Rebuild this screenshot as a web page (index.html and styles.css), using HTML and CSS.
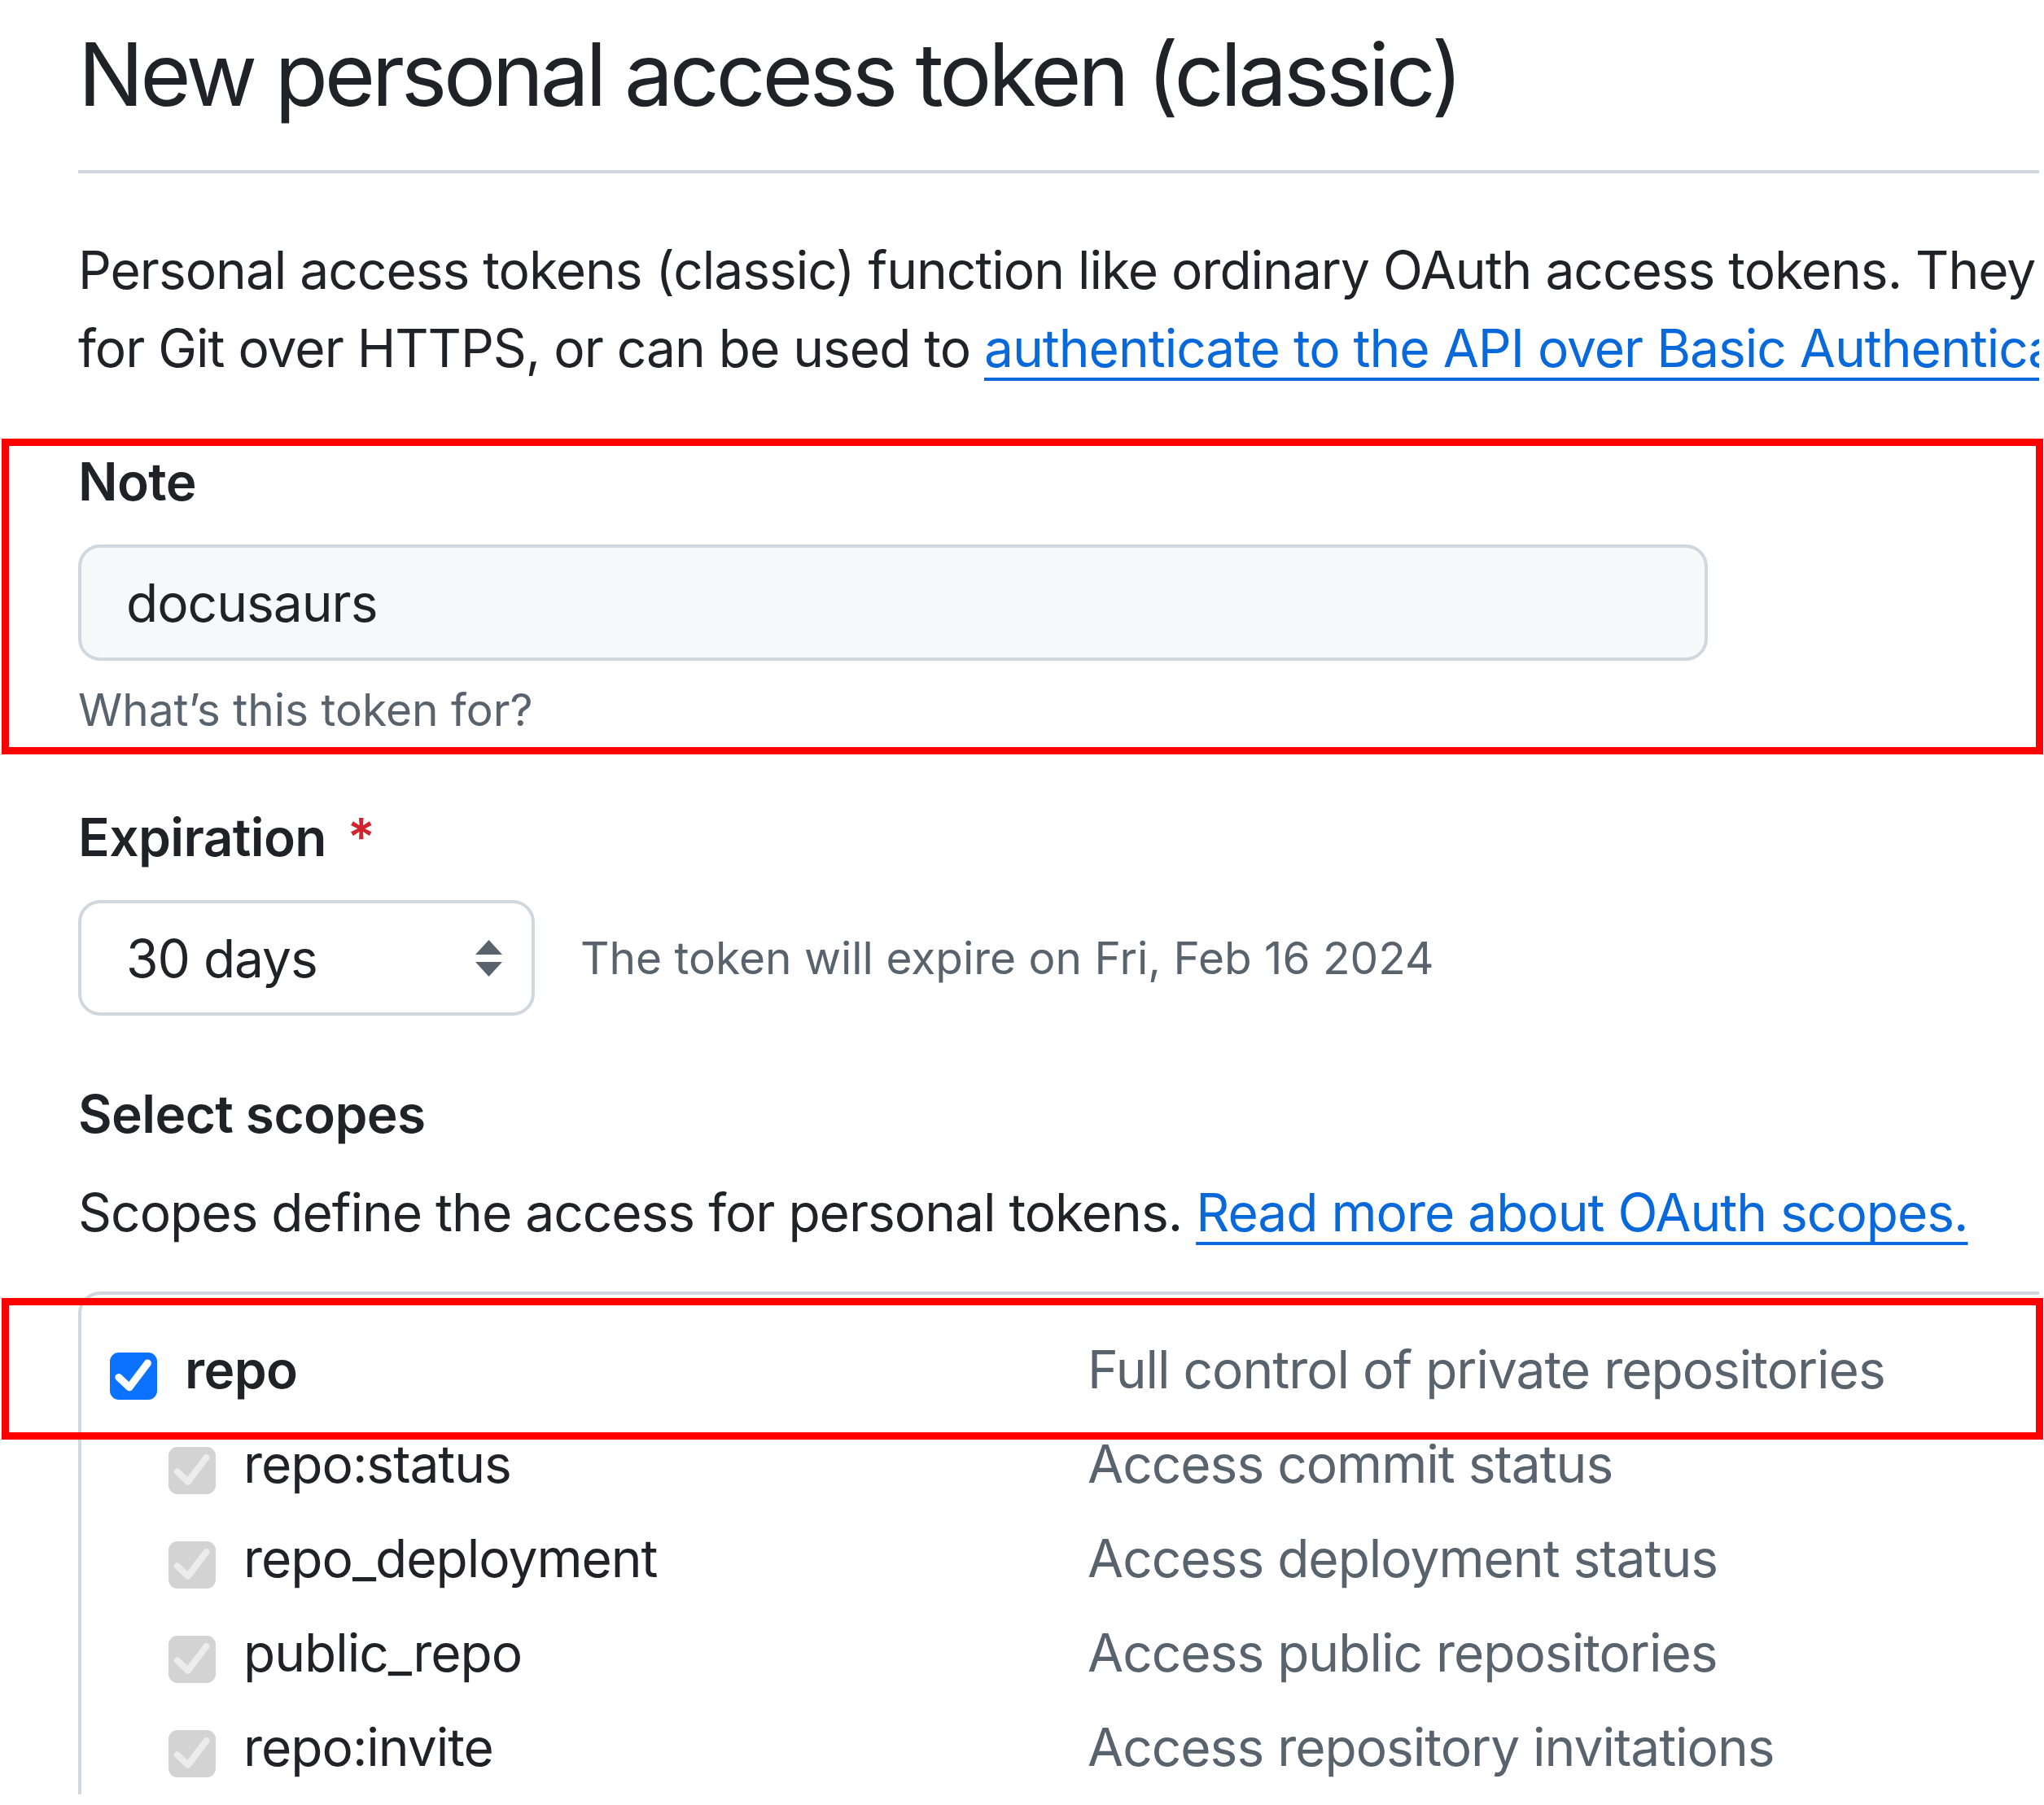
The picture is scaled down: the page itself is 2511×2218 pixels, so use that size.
FILE: index.html
```html
<!DOCTYPE html>
<html lang="en">
<head>
<meta charset="utf-8">
<title>New personal access token (classic)</title>
<link rel="stylesheet" href="styles.css">
</head>
<body>
<div class="shot">
  <main class="page">
    <div class="subhead">
      <h1 class="subhead-heading">New personal access token (classic)</h1>
    </div>

    <p class="intro">
      <span class="line">Personal access tokens (classic) function like ordinary OAuth access tokens. They can be used instead of a password</span>
      <span class="line">for Git over HTTPS, or can be used to <a href="#" class="link">authenticate to the API over Basic Authentication</a>.</span>
    </p>

    <section class="form-group">
      <label class="form-label" for="note">Note</label>
      <input class="text-input" id="note" type="text" value="docusaurs">
      <p class="note">What’s this token for?</p>
    </section>

    <section class="form-group">
      <div class="form-label">Expiration <span class="required">*</span></div>
      <div class="select-row">
        <div class="select">
          <span>30 days</span>
          <svg class="select-arrows" width="33" height="45" viewBox="0 0 33 45" aria-hidden="true">
            <polygon points="0,18 16.5,0 33,18" fill="#59636e"/>
            <polygon points="0,27 33,27 16.5,45" fill="#59636e"/>
          </svg>
        </div>
        <span class="expire-text">The token will expire on Fri, Feb 16 2024</span>
      </div>
    </section>

    <section class="form-group scopes-group">
      <div class="form-label">Select scopes</div>
      <p class="scopes-intro">Scopes define the access for personal tokens. <a href="#" class="link">Read more about OAuth scopes.</a></p>

      <div class="scope-box">
        <div class="scope-row">
          <div class="scope-name">
            <span class="checkbox checked">
              <svg viewBox="0 0 16 16" aria-hidden="true"><polyline points="3,8.4 6.6,11.8 12.8,3.6" fill="none" stroke="#fff" stroke-width="2.5" stroke-linecap="round" stroke-linejoin="round"/></svg>
            </span>
            <strong>repo</strong>
          </div>
          <div class="scope-desc">Full control of private repositories</div>
        </div>
        <div class="scope-row sub">
          <div class="scope-name">
            <span class="checkbox disabled">
              <svg viewBox="0 0 16 16" aria-hidden="true"><polyline points="3,8.4 6.6,11.8 12.8,3.6" fill="none" stroke="#ececec" stroke-width="2.2" stroke-linecap="round" stroke-linejoin="round"/></svg>
            </span>
            <span>repo:status</span>
          </div>
          <div class="scope-desc">Access commit status</div>
        </div>
        <div class="scope-row sub">
          <div class="scope-name">
            <span class="checkbox disabled">
              <svg viewBox="0 0 16 16" aria-hidden="true"><polyline points="3,8.4 6.6,11.8 12.8,3.6" fill="none" stroke="#ececec" stroke-width="2.2" stroke-linecap="round" stroke-linejoin="round"/></svg>
            </span>
            <span>repo_deployment</span>
          </div>
          <div class="scope-desc">Access deployment status</div>
        </div>
        <div class="scope-row sub">
          <div class="scope-name">
            <span class="checkbox disabled">
              <svg viewBox="0 0 16 16" aria-hidden="true"><polyline points="3,8.4 6.6,11.8 12.8,3.6" fill="none" stroke="#ececec" stroke-width="2.2" stroke-linecap="round" stroke-linejoin="round"/></svg>
            </span>
            <span>public_repo</span>
          </div>
          <div class="scope-desc">Access public repositories</div>
        </div>
        <div class="scope-row sub">
          <div class="scope-name">
            <span class="checkbox disabled">
              <svg viewBox="0 0 16 16" aria-hidden="true"><polyline points="3,8.4 6.6,11.8 12.8,3.6" fill="none" stroke="#ececec" stroke-width="2.2" stroke-linecap="round" stroke-linejoin="round"/></svg>
            </span>
            <span>repo:invite</span>
          </div>
          <div class="scope-desc">Access repository invitations</div>
        </div>
      </div>
    </section>
  </main>

  <div class="mark mark-note"></div>
  <div class="mark mark-repo"></div>
</div>
</body>
</html>
```

FILE: styles.css
```css
html, body {
  margin: 0;
  padding: 0;
  background: #ffffff;
}

body {
  font-family: Inter, "Liberation Sans", "DejaVu Sans", sans-serif;
  color: #1f2328;
  overflow: hidden;
}

.shot {
  position: relative;
  width: 2511px;
  height: 2218px;
  overflow: hidden;
}

.page {
  width: 2409px;
  padding-left: 96px;
  overflow: hidden;
}

/* Heading */
.subhead {
  margin-top: 23px;
  padding-bottom: 49px;
  border-bottom: 4px solid #d0d7de;
}

.subhead-heading {
  margin: 0;
  font-size: 107px;
  font-weight: 400;
  line-height: 137px;
  letter-spacing: -4.3px;
}

/* Intro paragraph */
.intro {
  margin: 71px 0 0;
  font-size: 64px;
  line-height: 96px;
  letter-spacing: -1px;
}

.intro .line {
  display: block;
  white-space: nowrap;
}

.link {
  color: #0969da;
  text-decoration: underline;
  text-decoration-thickness: 4px;
  text-underline-offset: 13px;
}

/* Form groups */
.form-group {
  margin-top: 68px;
}

.scopes-group {
  margin-top: 73px;
}

.form-label {
  display: block;
  font-size: 64px;
  font-weight: 600;
  line-height: 96px;
  letter-spacing: -0.6px;
}

.required {
  color: #d1242f;
  margin-left: 10px;
}

.text-input {
  display: block;
  box-sizing: border-box;
  width: 2002px;
  height: 143px;
  margin-top: 29px;
  padding: 0 55px;
  border: 4.5px solid #d0d7de;
  border-radius: 27px;
  background: #f6f8fa;
  font: inherit;
  font-size: 64px;
  letter-spacing: -1px;
  color: #1f2328;
  outline: none;
}

.note {
  margin: 19px 0 0;
  font-size: 55px;
  line-height: 82px;
  color: #59636e;
}

.select-row {
  display: flex;
  align-items: center;
  margin-top: 29px;
}

.select {
  box-sizing: border-box;
  width: 561px;
  height: 142px;
  display: flex;
  align-items: center;
  justify-content: space-between;
  padding: 0 36px 0 55px;
  border: 4.5px solid #d0d7de;
  border-radius: 27px;
  background: #ffffff;
  font-size: 64px;
  letter-spacing: -1px;
}

.select-arrows {
  display: block;
}

.expire-text {
  margin-left: 56px;
  font-size: 55px;
  color: #59636e;
}

.scopes-intro {
  margin: 25px 0 0;
  font-size: 64px;
  line-height: 96px;
  letter-spacing: -1px;
  white-space: nowrap;
}

/* Scope list */
.scope-box {
  margin-top: 49px;
  width: 2600px;
  padding-top: 34px;
  border-top: 4.5px solid #d0d7de;
  border-left: 4.5px solid #d0d7de;
  border-top-left-radius: 27px;
}

.scope-row {
  display: grid;
  grid-template-columns: 1201px 1fr;
  align-items: center;
  height: 116px;
  padding-left: 35px;
  font-size: 64px;
  line-height: 116px;
  letter-spacing: -1px;
}

.scope-name {
  display: flex;
  align-items: center;
  gap: 34px;
}

.scope-row.sub .scope-name {
  padding-left: 72px;
}

.scope-name strong {
  font-weight: 600;
  letter-spacing: -0.6px;
}

.scope-desc {
  color: #59636e;
  white-space: nowrap;
}

.checkbox {
  flex: none;
  display: block;
  box-sizing: border-box;
  width: 58px;
  height: 58px;
  margin-top: 16px;
  border-radius: 11px;
}

.checkbox svg {
  display: block;
  width: 58px;
  height: 58px;
}

.checkbox.checked {
  background: #0a72ff;
}

.checkbox.disabled {
  background: #d3d3d3;
}

/* Annotation marks drawn over the screenshot */
.mark {
  position: absolute;
  box-sizing: border-box;
  border: 9px solid #ff0000;
  pointer-events: none;
}

.mark-note {
  left: 2px;
  top: 539px;
  width: 2508px;
  height: 388px;
}

.mark-repo {
  left: 2px;
  top: 1595px;
  width: 2508px;
  height: 174px;
}
```
